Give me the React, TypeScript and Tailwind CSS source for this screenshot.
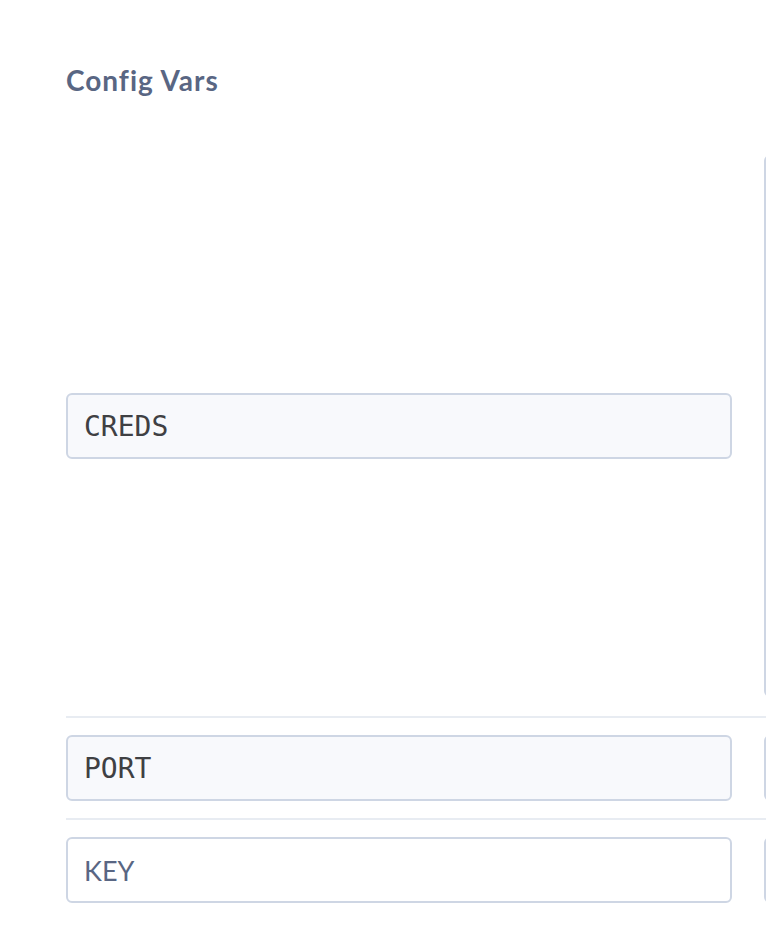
export default function App() {
  const rows = [
    { key: 'CREDS', tall: true },
    { key: 'PORT', tall: false },
  ];

  return (
    <div className="w-[766px] h-[938px] overflow-hidden bg-white font-['Lato',sans-serif]">
      <div className="pl-[66px] pt-[62px]">
        <h2 className="text-[28px] leading-[36px] font-bold tracking-[1px] text-[#596683]">Config Vars</h2>

        <div className="mt-[39px]">
          {rows.map((row) => (
            <div
              key={row.key}
              className={`flex items-center gap-[32px] border-b-2 border-[#e8ecf2] ${row.tall ? 'pt-[18px] pb-[19px]' : 'py-[17px]'}`}
            >
              <input
                readOnly
                value={row.key}
                className="w-[666px] h-[66px] shrink-0 rounded-[6px] border-2 border-[#ced6e4] bg-[#f8f9fc] px-[16px] font-['DejaVu_Sans_Mono',monospace] text-[28px] text-[#3f4043] outline-none"
              />
              <textarea
                readOnly
                className={`w-[666px] shrink-0 resize-none rounded-[6px] border-2 border-[#ced6e4] bg-[#f8f9fc] ${row.tall ? 'h-[542px]' : 'h-[66px]'}`}
              />
            </div>
          ))}
          <div className="flex items-center gap-[32px] py-[17px]">
            <input
              placeholder="KEY"
              className="w-[666px] h-[66px] shrink-0 rounded-[6px] border-2 border-[#ced6e4] bg-white px-[16px] font-['Lato',sans-serif] text-[27px] placeholder:text-[#596683] outline-none"
            />
            <textarea
              className="w-[666px] h-[66px] shrink-0 resize-none rounded-[6px] border-2 border-[#ced6e4] bg-white"
            />
          </div>
        </div>
      </div>
    </div>
  );
}
